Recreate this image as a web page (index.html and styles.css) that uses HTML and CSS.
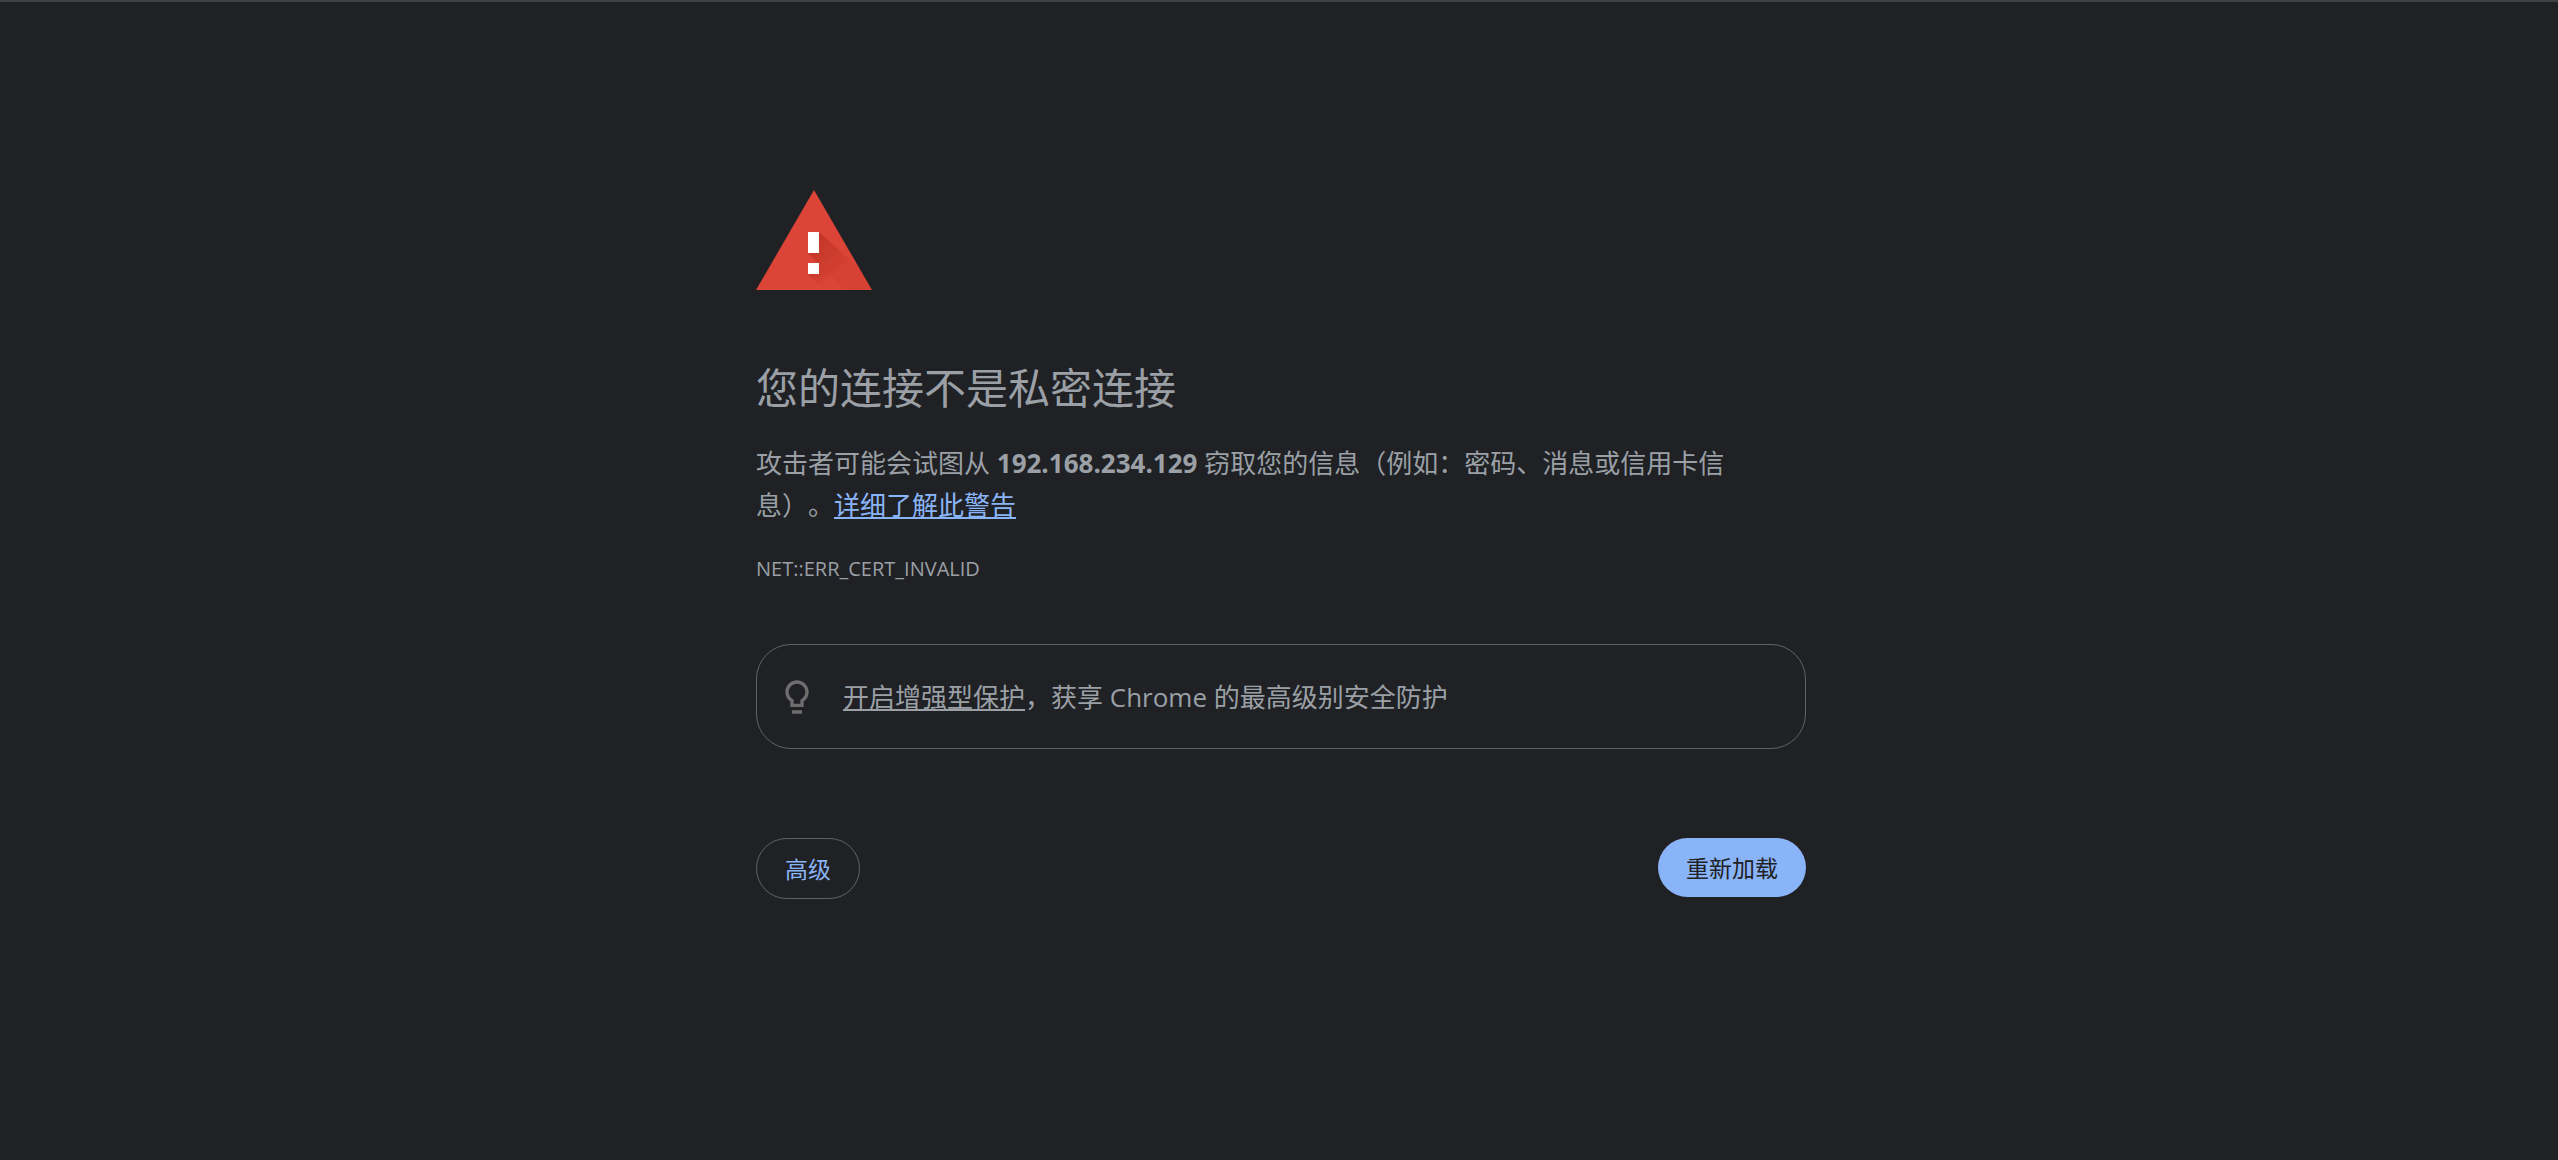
FILE: index.html
```html
<!DOCTYPE html>
<html lang="zh-CN">
<head>
    <meta charset="UTF-8">
    <meta name="viewport" content="width=device-width, initial-scale=1.0">
    <title>隐私设置错误</title>
    <link rel="stylesheet" href="styles.css">
</head>
<body>

<main class="interstitial">
    <svg class="icon" viewBox="0 0 116 100" aria-hidden="true">
        <defs>
            <linearGradient id="shade" gradientUnits="userSpaceOnUse" x1="58" y1="52" x2="86" y2="80">
                <stop offset="0" stop-color="#a52714" stop-opacity=".45"/>
                <stop offset="1" stop-color="#a52714" stop-opacity=".1"/>
            </linearGradient>
            <linearGradient id="shadeDot" gradientUnits="userSpaceOnUse" x1="56" y1="80" x2="70" y2="94">
                <stop offset="0" stop-color="#a52714" stop-opacity=".4"/>
                <stop offset="1" stop-color="#a52714" stop-opacity="0"/>
            </linearGradient>
        </defs>
        <path fill="#db4437" d="M58 0l58 100H0z"/>
        <path fill="url(#shade)" d="M63 42l40 36 13 22H89L52 63z"/>
        <path fill="url(#shadeDot)" d="M63 74l26 26H68L52 84z"/>
        <path fill="#fff" d="M52 42h11v21H52zM52 73h11v11H52z"/>
    </svg>

    <h1>您的连接不是私密连接</h1>
    <p class="message">攻击者可能会试图从 <strong>192.168.234.129</strong> 窃取您的信息（例如：密码、消息或信用卡信息）。<a href="#">详细了解此警告</a></p>
    <div class="error-code">NET::ERR_CERT_INVALID</div>

    <div class="promo">
        <svg class="bulb" viewBox="0 0 24 24" aria-hidden="true">
            <path d="M9 20h6v2H9zM12 2C8.14 2 5 5.14 5 9c0 2.38 1.19 4.47 3 5.74V18h8v-3.26c1.81-1.27 3-3.36 3-5.74 0-3.86-3.14-7-7-7zm2.85 11.1l-.85.6V16h-4v-2.3l-.85-.6C7.8 12.16 7 10.63 7 9c0-2.76 2.24-5 5-5s5 2.24 5 5c0 1.63-.8 3.16-2.15 4.1z"/>
        </svg>
        <p><a href="#">开启增强型保护</a>，获享 Chrome 的最高级别安全防护</p>
    </div>

    <div class="buttons">
        <button type="button" class="secondary">高级</button>
        <button type="button" class="primary">重新加载</button>
    </div>
</main>

</body>
</html>
```

FILE: styles.css
```css
* {
    box-sizing: border-box;
}
body {
    margin: 0;
    padding: 0 0 0 4px;
    min-height: 100vh;
    border-top: 2px solid #3f4042;
    background-color: #202124;
    color: #9aa0a6;
    font-family: "Open Sans", "Noto Sans CJK SC", sans-serif;
    font-size: 26px;
    line-height: 42px;
    text-spacing-trim: space-all;
}
.interstitial {
    max-width: 1050px;
    margin: 0 auto;
    padding-top: 188px;
}
.icon {
    display: block;
    width: 116px;
    height: 100px;
}
h1 {
    margin: 72px 0 28px;
    font-size: 42px;
    font-weight: 400;
    line-height: 52px;
}
p {
    margin: 0;
}
.message {
    padding-right: 56px;
}
.message a {
    color: #8ab4f8;
}
.error-code {
    margin-top: 24px;
    font-size: 20px;
    line-height: 38px;
}
.promo {
    display: flex;
    align-items: center;
    gap: 26px;
    min-height: 105px;
    margin-top: 56px;
    padding: 0 20px;
    border: 1px solid #5f6368;
    border-radius: 35px;
}
.promo a {
    color: inherit;
}
.bulb {
    width: 40px;
    height: 40px;
    fill: #6e6e6e;
}
.buttons {
    display: flex;
    justify-content: space-between;
    align-items: flex-start;
    margin-top: 89px;
}
button {
    padding: 13px 28px 11px;
    border: 0;
    border-radius: 35px;
    font-family: inherit;
    font-size: 23px;
    line-height: 35px;
    cursor: pointer;
}
.primary {
    background-color: #8ab4f8;
    color: #202124;
}
.secondary {
    border: 1px solid #5f6368;
    background-color: transparent;
    color: #8ab4f8;
}
```
